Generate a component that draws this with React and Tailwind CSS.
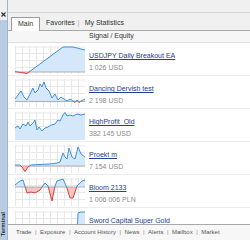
import React from "react";

const rows = [
  {
    title: "USDJPY Daily Breakout EA",
    value: "1 026 USD",
    baseline: 26,
    pts: [[0, 25.5], [6, 26.5], [12, 27.5], [48, 1], [58, 1], [70, 4]],
  },
  {
    title: "Dancing Dervish test",
    value: "2 198 USD",
    baseline: 22.5,
    pts: [[0, 20], [3, 16], [6, 12], [9, 18], [12, 21], [15, 15], [18, 9], [20, 14], [23, 11], [25, 5], [27, 8], [29, 3], [31, 9], [34, 12], [37, 19], [40, 15], [43, 21], [46, 18], [49, 20], [52, 22], [55, 20], [58, 22], [60, 23.5], [62, 21], [64, 23.5], [66, 22], [70, 20]],
  },
  {
    title: "HighProfit_Old",
    value: "382 145 USD",
    baseline: 30,
    pts: [[0, 16], [3, 14], [5, 17], [8, 12], [11, 14], [13, 10], [15, 14], [18, 11], [20, 8], [22, 18], [24, 15], [27, 19], [30, 16], [33, 15], [36, 13], [40, 12], [43, 8], [45, 9], [48, 3], [50, 0.5], [52, 4], [55, 3], [58, 4], [62, 2], [66, 3], [70, 2]],
  },
  {
    title: "Proekt m",
    value: "7 154 USD",
    baseline: 21,
    pts: [[0, 20], [5, 20], [7, 22], [10, 26.5], [13, 22], [16, 20], [25, 19.5], [35, 19], [42, 18], [45, 17], [48, 8], [50, 12], [52, 14], [54, 3], [57, 12], [60, 14], [63, 2], [66, 9], [70, 12]],
  },
  {
    title: "Bloom 2133",
    value: "1 006 006 PLN",
    baseline: 9,
    pts: [[0, 7], [5, 3], [8, 2], [12, 15], [16, 14], [20, 15], [25, 12], [30, 5], [33, 8], [37, 23], [40, 8], [42, 3], [48, 1], [52, 10], [55, 20], [58, 20], [62, 8], [67, 3], [70, 2]],
  },
  {
    title: "Sword Capital Super Gold",
    value: "",
    baseline: 30,
    pts: [[0, 27], [60, 27], [62, 26], [63, 2], [66, 1], [70, 1]],
  },
];

function Chart({ baseline, pts, idx }) {
  const W = 70;
  const H = 28;
  const line = pts.map((p, i) => (i ? "L" : "M") + p[0] + " " + p[1]).join(" ");
  const area =
    line + ` L${pts[pts.length - 1][0]} ${baseline} L${pts[0][0]} ${baseline} Z`;
  const vx = [0, 7, 14, 21, 28, 35, 42, 49, 56, 63, 70];
  const hy = [0.5, 7, 14, 21];
  const a = `ca${idx}`;
  const b = `cb${idx}`;
  return (
    <svg width={W} height={H} viewBox={`0 0 ${W} ${H}`} className="shrink-0 block">
      <defs>
        <clipPath id={a}>
          <rect x="0" y="-5" width={W} height={baseline + 5} />
        </clipPath>
        <clipPath id={b}>
          <rect x="0" y={baseline} width={W} height="40" />
        </clipPath>
      </defs>
      {vx.map((x) => (
        <line key={"v" + x} x1={x + 0.5} x2={x + 0.5} y1="0" y2={H} stroke="#e8e8e8" strokeWidth="1" />
      ))}
      {hy.map((y) => (
        <line key={"h" + y} x1="0" x2={W} y1={y + 0.5} y2={y + 0.5} stroke="#e8e8e8" strokeWidth="1" />
      ))}
      <path d={area} fill="#d5e8fb" clipPath={`url(#${a})`} />
      <path d={area} fill="#f4c3c3" clipPath={`url(#${b})`} />
      {baseline < H && (
        <line x1="0" x2={W} y1={baseline} y2={baseline} stroke="#b0b0b0" strokeWidth="1" />
      )}
      <path d={line} fill="none" stroke="#3e8fe0" strokeWidth="1" clipPath={`url(#${a})`} />
      <path d={line} fill="none" stroke="#dd3b3b" strokeWidth="1" clipPath={`url(#${b})`} />
    </svg>
  );
}

export default function App() {
  const bottomTabs = ["Trade", "Exposure", "Account History", "News", "Alerts", "Mailbox", "Market"];
  return (
    <div
      className="w-[250px] h-[250px] bg-white flex flex-col overflow-hidden"
      style={{ fontFamily: '"Liberation Sans", Arial, sans-serif' }}
    >
      <div className="flex h-[240px]">
        {/* sidebar */}
        <div className="w-[8px] flex flex-col border-r border-[#9fb4d0]">
          <div className="h-[20px] shrink-0 bg-[#f0f0f0] flex flex-col items-center justify-end pb-[3px]">
            <svg width="5" height="5" viewBox="0 0 5 5" className="block">
              <path d="M0.5 0.5 L4.5 4.5 M4.5 0.5 L0.5 4.5" stroke="#333" strokeWidth="1.2" />
            </svg>
          </div>
          <div className="flex-1 bg-[#b9cce4] flex items-end justify-center pb-[3px]">
            <span className="[writing-mode:vertical-rl] rotate-180 text-[6px] leading-[7px] font-bold text-[#2a2a2a]">
              Terminal
            </span>
          </div>
        </div>
        {/* main panel */}
        <div className="flex-1 flex flex-col min-w-0">
          {/* tab strip */}
          <div className="h-[31px] bg-[#f0f0f0] flex flex-col">
            <div className="h-[13px] border-b border-[#d4d4d4]" />
            <div className="flex-1 flex items-end border-b border-[#a8a8a8] pl-[3px] text-[7px] text-[#333]">
              <div className="w-[29px] h-[14px] bg-white border border-b-0 border-[#9a9a9a] flex items-center justify-center mb-[-1px]">
                Main
              </div>
              <div className="h-[14px] flex items-center pl-[6px]">Favorites</div>
              <div className="h-[14px] flex items-center pl-[3px] text-[#aaa]">|</div>
              <div className="h-[14px] flex items-center pl-[5px]">My Statistics</div>
            </div>
          </div>
          {/* header */}
          <div className="h-[12px] bg-[#f6f6f6] border-b border-[#dedede] flex items-center pl-[81px] text-[7px] text-[#333]">
            Signal / Equity
          </div>
          {/* list */}
          <div className="flex-1 overflow-hidden bg-white">
            {rows.map((r, i) => (
              <div key={i} className="h-[33px] flex border-b border-[#ececec] pl-[7px] pt-[3px]">
                <Chart baseline={r.baseline} pts={r.pts} idx={i} />
                <div className="pl-[4px] flex flex-col pt-[6px]">
                  <span className="text-[7px] leading-[8px] text-[#25408f] underline whitespace-nowrap">
                    {r.title}
                  </span>
                  <span className="text-[7px] leading-[8px] text-[#8a8a8a] mt-[4px] whitespace-nowrap">
                    {r.value}
                  </span>
                </div>
              </div>
            ))}
          </div>
          {/* bottom tabs */}
          <div className="h-[16px] border-t border-[#a8a8a8] bg-[#f7f7f7] flex items-center pl-[8px] text-[6px] text-[#555] whitespace-nowrap">
            {bottomTabs.map((t, i) => (
              <React.Fragment key={t}>
                {i > 0 && <span className="px-[3.5px] text-[#888]">|</span>}
                <span>{t}</span>
              </React.Fragment>
            ))}
          </div>
        </div>
      </div>
      <div className="h-[10px] bg-white" />
    </div>
  );
}
